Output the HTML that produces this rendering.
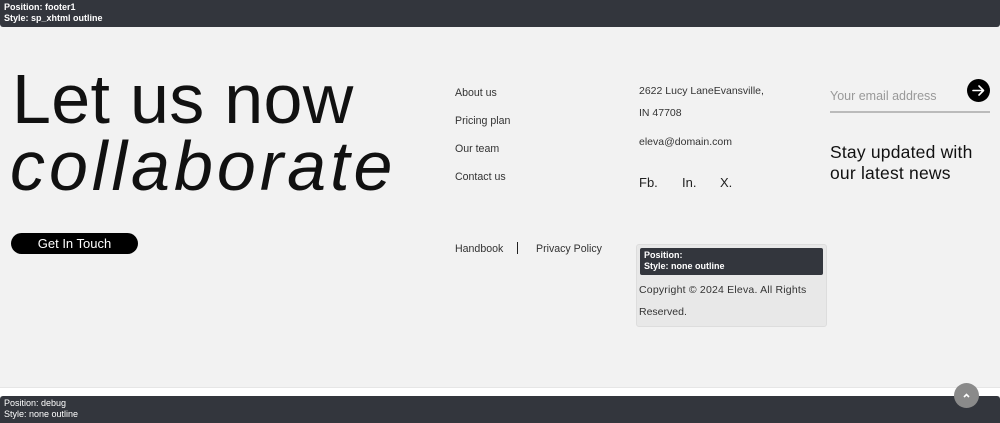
<!DOCTYPE html>
<html><head><meta charset="utf-8"><style>
*{margin:0;padding:0;box-sizing:border-box}
body{width:1000px;height:423px;background:#f2f2f2;font-family:"Liberation Sans",sans-serif;position:relative;overflow:hidden;color:#222}
.a{position:absolute;white-space:nowrap}
.bar{background:#33363d;color:#fff;font-size:9px;font-weight:bold;line-height:11px;padding:2px 4px}
.s{font-size:10.6px;color:#333}
</style></head><body>
<div class="a bar" style="left:0;top:0;width:1000px;height:27px;border-radius:0 0 3px 3px">Position: footer1<br>Style: sp_xhtml outline</div>
<div class="a" style="left:12px;top:64px;font-size:70px;line-height:70px;color:#111;letter-spacing:0.3px">Let us now</div>
<div class="a" style="left:10px;top:131px;font-size:70px;line-height:70px;color:#111;font-style:italic;letter-spacing:4px">collaborate</div>
<div class="a" style="left:11px;top:233px;width:127px;height:21px;background:#000;border-radius:11px;color:#fff;font-size:13px;line-height:21px;text-align:center">Get In Touch</div>
<div class="a s" style="left:455px;top:87px">About us</div>
<div class="a s" style="left:455px;top:115px">Pricing plan</div>
<div class="a s" style="left:455px;top:143px">Our team</div>
<div class="a s" style="left:455px;top:171px">Contact us</div>
<div class="a s" style="left:455px;top:243px">Handbook</div>
<div class="a" style="left:517px;top:242px;width:1px;height:12px;background:#222"></div>
<div class="a s" style="left:536px;top:243px">Privacy Policy</div>
<div class="a s" style="left:639px;top:85px;font-size:10.5px">2622 Lucy LaneEvansville,</div>
<div class="a s" style="left:639px;top:107px;font-size:10.5px">IN 47708</div>
<div class="a s" style="left:639px;top:136px;font-size:10.5px">eleva@domain.com</div>
<div class="a" style="left:639px;top:175px;font-size:13px">Fb.</div>
<div class="a" style="left:682px;top:175px;font-size:13px">In.</div>
<div class="a" style="left:720px;top:175px;font-size:13px">X.</div>
<div class="a" style="left:636px;top:244px;width:191px;height:83px;background:#e8e8e8;border:1px solid #ddd;border-radius:3px"></div>
<div class="a bar" style="left:640px;top:248px;width:183px;height:27px;border-radius:2px">Position:<br>Style: none outline</div>
<div class="a s" style="left:639px;top:284px;font-size:10.5px;letter-spacing:0.2px">Copyright © 2024 Eleva. All Rights</div>
<div class="a s" style="left:639px;top:306px;font-size:10.5px">Reserved.</div>
<div class="a" style="left:830px;top:89px;font-size:12.5px;color:#999">Your email address</div>
<div class="a" style="left:967px;top:79px;width:23px;height:23px;border-radius:50%;background:#000"></div>
<svg class="a" style="left:967px;top:79px" width="23" height="23" viewBox="0 0 23 23"><path d="M6 11.5h10M12 7l4.5 4.5L12 16" stroke="#fff" stroke-width="1.6" fill="none" stroke-linecap="round" stroke-linejoin="round"/></svg>
<div class="a" style="left:830px;top:111px;width:160px;height:2px;background:#bbb"></div>
<div class="a" style="left:830px;top:142px;font-size:17.5px;line-height:21px;color:#111;letter-spacing:0.2px">Stay updated with<br>our latest news</div>
<div class="a" style="left:0;top:387px;width:1000px;height:9px;background:#fff;border-top:1px solid #e6e6e6"></div>
<div class="a bar" style="left:0;top:396px;width:1000px;height:27px;font-weight:normal;border-radius:3px 3px 0 0">Position: debug<br>Style: none outline</div>
<div class="a" style="left:954px;top:383px;width:25px;height:25px;border-radius:50%;background:#8a8a8a"></div>
<svg class="a" style="left:954px;top:383px" width="25" height="25"><path d="M10 14l2.5-2.5L15 14" stroke="#fff" stroke-width="1.6" fill="none"/></svg>
</body></html>
